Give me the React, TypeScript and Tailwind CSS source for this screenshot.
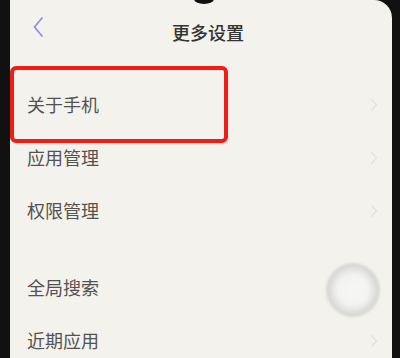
import React from "react";

const items = [["关于手机", "应用管理", "权限管理"], ["全局搜索", "近期应用"]];

function Chevron() {
  return (
    <svg width="8" height="14" viewBox="0 0 8 14" fill="none">
      <path d="M1.5 1.5L6.5 7L1.5 12.5" stroke="#e4e2dc" strokeWidth="1.4" strokeLinecap="round" strokeLinejoin="round" />
    </svg>
  );
}

function Row({ label }: { label: string }) {
  return (
    <div className="flex h-[53px] items-center justify-between pl-[17px] pr-[14px]">
      <span className="text-[18px] text-[#525252]">{label}</span>
      <Chevron />
    </div>
  );
}

export default function App() {
  return (
    <div
      className="flex h-[358px] w-[400px] overflow-hidden bg-[#111]"
      style={{ fontFamily: '"Noto Sans CJK SC", "Noto Sans", sans-serif' }}
    >
      <div className="relative ml-[10px] mr-[8px] flex-1 rounded-tr-[18px] bg-[#f4f2ec]">
        {/* notch */}
        <span className="absolute -top-[6px] left-[184px] h-[10px] w-[20px] rounded-[50%] bg-[#111]" />

        {/* header */}
        <div className="relative flex h-[64px] items-center justify-center">
          <svg className="absolute left-[22px] top-[16px]" width="12" height="22" viewBox="0 0 12 22" fill="none">
            <path d="M10 2L2.5 11L10 20" stroke="#8d92d6" strokeWidth="1.8" strokeLinecap="round" strokeLinejoin="round" />
          </svg>
          <h1 className="pl-[14px] text-[18px] font-medium text-[#333]">更多设置</h1>
        </div>

        {/* list */}
        <div className="pt-[14px]">
          {items[0].map((t) => (
            <Row key={t} label={t} />
          ))}
        </div>
        <div className="pt-[24px]">
          {items[1].map((t) => (
            <Row key={t} label={t} />
          ))}
        </div>

        {/* annotation box */}
        <span className="absolute left-0 top-[66px] h-[77px] w-[218px] rounded-[6px] border-[4px] border-[#f21c16]" />

        {/* floating ball */}
        <span className="absolute left-[316px] top-[263px] h-[54px] w-[54px] rounded-full bg-[radial-gradient(circle,#f7f7f5_0%,#f3f3f1_40%,#d8d8d6_64%,#dcdcdb_100%)] blur-[1px]" />
      </div>
    </div>
  );
}
